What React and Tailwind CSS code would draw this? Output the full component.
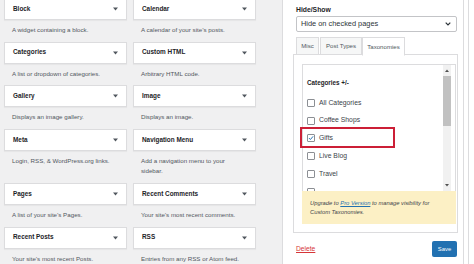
import React from "react";

const widgets = [
  ["Block", "A widget containing a block."],
  ["Calendar", "A calendar of your site’s posts."],
  ["Categories", "A list or dropdown of categories."],
  ["Custom HTML", "Arbitrary HTML code."],
  ["Gallery", "Displays an image gallery."],
  ["Image", "Displays an image."],
  ["Meta", "Login, RSS, & WordPress.org links."],
  ["Navigation Menu", "Add a navigation menu to your sidebar."],
  ["Pages", "A list of your site’s Pages."],
  ["Recent Comments", "Your site’s most recent comments."],
  ["Recent Posts", "Your site’s most recent Posts."],
  ["RSS", "Entries from any RSS or Atom feed."],
];

const cats = ["All Categories", "Coffee Shops", "Gifts", "Live Blog", "Travel"];

function Tri() {
  return (
    <svg width="5" height="4" viewBox="0 0 5 4" className="shrink-0">
      <polygon points="0,0.5 5,0.5 2.5,3.5" fill="#50575e" />
    </svg>
  );
}

function Widget({ title, desc }) {
  return (
    <div className="flex flex-col">
      <div className="h-[22px] bg-white border border-[#dcdcde] shadow-[0_1px_1px_rgba(0,0,0,0.04)] flex items-center justify-between pl-[8px] pr-[8px]">
        <span className="text-[6.4px] font-bold text-[#1d2327] leading-none">{title}</span>
        <Tri />
      </div>
      <p className="pt-[5px] pb-[6px] pl-[8px] w-[109px] text-[6.2px] leading-[10.6px] text-[#50575e]">{desc}</p>
    </div>
  );
}

function Checkbox({ checked }) {
  return (
    <span className="w-[8px] h-[8px] border border-[#8c8f94] rounded-[1px] bg-white flex items-center justify-center shrink-0">
      {checked && (
        <svg width="8" height="8" viewBox="0 0 8 8">
          <path d="M1.3 4.1 L3.2 6 L6.8 1.8" fill="none" stroke="#2271b1" strokeWidth="1.3" />
        </svg>
      )}
    </span>
  );
}

export default function App() {
  return (
    <div className="relative w-[474px] h-[264px] overflow-hidden flex bg-white font-['Liberation_Sans',Arial,sans-serif]">
      {/* widget list */}
      <div className="w-[282px] h-full shrink-0 bg-[#f0f0f1] pl-[4px] pr-[26px]">
        <div className="grid grid-cols-2 gap-x-[6px] -mt-[2px]">
          {widgets.map(([t, d]) => (
            <Widget key={t} title={t} desc={d} />
          ))}
        </div>
      </div>

      {/* right panel */}
      <div className="flex-1 h-full bg-white border-l border-[#dcdcde] flex">
        <div className="w-[181px] h-full border-r border-[#dcdcde] pl-[13px] pr-[6px] pt-[5px]">
          <div className="text-[6.8px] font-bold text-[#1d2327] leading-[10px]">Hide/Show</div>
          <div className="mt-[1px] h-[16px] border border-[#c3c4c7] rounded-[2px] flex items-center justify-between pl-[4px] pr-[5px]">
            <span className="text-[7.4px] text-[#2c3338] leading-none">Hide on checked pages</span>
            <svg width="6" height="4" viewBox="0 0 6 4">
              <polyline points="0.7,0.7 3,3 5.3,0.7" fill="none" stroke="#2c3338" strokeWidth="1.2" />
            </svg>
          </div>

          <div className="mt-[5px] flex h-[18px] relative z-10 -mb-px">
            <div className="w-[23px] h-[18px] bg-[#f6f7f7] border border-[#dcdcde] flex items-center justify-center text-[6.1px] text-[#50575e]">Misc</div>
            <div className="ml-[1px] w-[42px] h-[18px] bg-[#f6f7f7] border border-[#dcdcde] flex items-center justify-center text-[6.1px] text-[#50575e]">Post Types</div>
            <div className="w-[43px] h-[19px] bg-white border border-[#dcdcde] border-b-white flex items-center justify-center text-[6.1px] text-[#50575e]">Taxonomies</div>
          </div>

          <div className="h-[179px] border border-[#dcdcde] -ml-[3px] -mr-[1px] pt-[9px] pl-[8px] pr-[1px]">
            <div className="h-[127px] border border-b-0 border-[#dcdcde] flex overflow-hidden">
              <div className="flex-1 pl-[4px] pt-[13px]">
                <div className="text-[6.3px] font-bold text-[#1d2327] leading-[10px]">Categories +/-</div>
                <div className="mt-[6px]">
                  {cats.map((c) => (
                    <div key={c} className="h-[17.8px] flex items-center gap-[4px]">
                      <Checkbox checked={c === "Gifts"} />
                      <span className="text-[6.8px] text-[#3c434a] leading-none">{c}</span>
                    </div>
                  ))}
                  <div className="h-[17.8px] flex items-center">
                    <Checkbox />
                  </div>
                </div>
              </div>
              <div className="w-[8px] mr-[4px] bg-[#f1f1f1] flex flex-col">
                <div className="h-[11px] flex items-center justify-center">
                  <svg width="4" height="3" viewBox="0 0 4 3"><polygon points="0,3 4,3 2,0.5" fill="#505050" /></svg>
                </div>
                <div className="h-[50px] bg-[#c1c1c1]" />
                <div className="flex-1" />
                <div className="h-[11px] flex items-center justify-center">
                  <svg width="4" height="3" viewBox="0 0 4 3"><polygon points="0,0 4,0 2,2.5" fill="#505050" /></svg>
                </div>
              </div>
            </div>
            <div className="h-[33px] bg-[#fcf0c5] pl-[8px] pr-[6px] pt-[7.5px] text-[5.8px] italic leading-[9px] text-[#3c434a]">
              Upgrade to <span className="text-[#2271b1] underline">Pro Version</span> to manage visibility for
              <br />
              Custom Taxonomies.
            </div>
          </div>

          <div className="mt-[8px] flex items-center justify-between">
            <span className="text-[6.7px] text-[#d63638] underline leading-none">Delete</span>
            <div className="w-[25px] h-[16px] bg-[#2271b1] rounded-[2px] flex items-center justify-center text-[5.9px] text-white">Save</div>
          </div>
        </div>
        <div className="w-[5px] h-full border-r border-[#dcdcde]" />
      </div>

      {/* annotation highlight */}
      <div className="absolute left-[300px] top-[127px] w-[95px] h-[21px] border-2 border-[#cc1f36]" />
    </div>
  );
}
